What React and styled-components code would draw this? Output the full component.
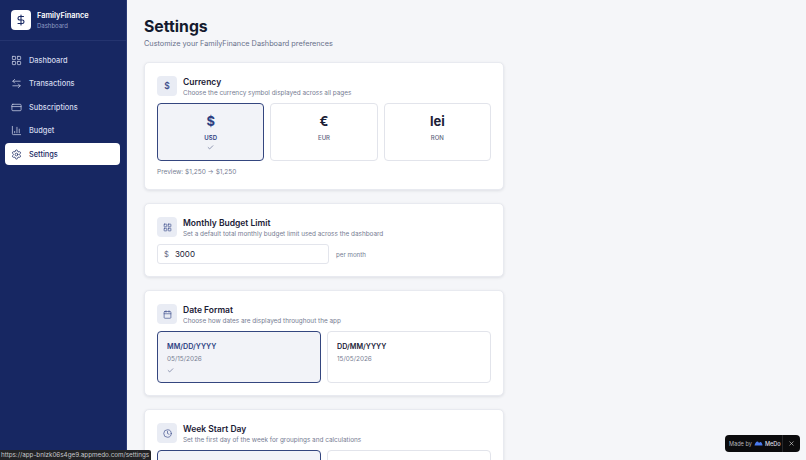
import React from "react";
import styled, { createGlobalStyle } from "styled-components";
import { LayoutGrid, ArrowLeftRight, CreditCard, BarChart3, Settings as Gear, DollarSign, Calendar, Clock, Check, X } from "lucide-react";

const Global = createGlobalStyle`
  html, body { margin: 0; padding: 0; height: 460px; overflow: hidden; background: #f5f6f9; }
  * { box-sizing: border-box; }
  body { font-family: Inter, "Liberation Sans", sans-serif; color: #141a2e; }
`;

const Page = styled.div`display: flex; height: 460px; overflow: hidden; position: relative;`;
const Sidebar = styled.aside`
  width: 127px; flex: none; background: #172762; border-right: 1px solid #2a3a75;
  display: flex; flex-direction: column;
`;
const Brand = styled.div`
  height: 41px; display: flex; align-items: center; gap: 6px; padding: 0 11px;
  border-bottom: 1px solid #24346f;
`;
const Logo = styled.div`
  width: 20px; height: 20px; border-radius: 4px; background: #fff; color: #172762;
  display: flex; align-items: center; justify-content: center;
`;
const BrandName = styled.div`font-size: 7.4px; font-weight: 600; color: #fff; line-height: 10px;`;
const BrandSub = styled.div`font-size: 6px; color: #8f9bc4; line-height: 9px;`;
const Nav = styled.nav`display: flex; flex-direction: column; gap: 1.5px; padding: 8px 6px 8px 5px;`;
const NavItem = styled.div`
  height: 22px; display: flex; align-items: center; gap: 7px; padding: 0 6px; border-radius: 4px;
  font-size: 7.4px; font-weight: 500;
  background: ${p => (p.$active ? "#fff" : "transparent")};
  color: ${p => (p.$active ? "#172762" : "#d3d9ec")};
`;
const Main = styled.main`flex: 1; padding: 17px 17px 0; min-width: 0;`;
const Title = styled.h1`margin: 0; font-size: 15.8px; line-height: 20px; font-weight: 700; color: #141a2e;`;
const Subtitle = styled.p`margin: 0; font-size: 7.3px; line-height: 13px; color: #68708a;`;
const Stack = styled.div`width: 360px; margin-top: 12px; display: flex; flex-direction: column; gap: 13px;`;
const Card = styled.section`
  background: #fff; border: 1px solid #e8eaf0; border-radius: 5px; padding: 13px 12px 12px;
  box-shadow: 0 1px 3px rgba(20,26,46,.1);
`;
const CardHeader = styled.div`display: flex; align-items: center; gap: 6px; height: 20px; margin-bottom: 7px;`;
const IconBox = styled.div`
  width: 20px; height: 20px; flex: none; border-radius: 4px; background: #e9ecf4; color: #3d4d8c;
  display: flex; align-items: center; justify-content: center; font-size: 8.5px; font-weight: 600;
`;
const HeaderText = styled.div`padding-top: 3px;`;
const CardTitle = styled.div`font-size: 8.5px; line-height: 11px; font-weight: 600; color: #1a2036;`;
const CardDesc = styled.div`font-size: 6.4px; line-height: 10px; color: #767d93;`;
const Grid = styled.div`display: grid; grid-template-columns: repeat(${p => p.$cols}, 1fr); gap: 6px;`;
const Option = styled.div`
  border-radius: 4px; border: ${p => (p.$on ? "1.5px solid #34467f" : "1.5px solid #e2e4eb")};
  background: ${p => (p.$on ? "#f2f3f8" : "#fff")};
  height: ${p => p.$h}px; display: flex; flex-direction: column;
  color: ${p => (p.$on ? "#2d3f82" : "#1a2036")};
`;
const CurrencyOption = styled(Option)`align-items: center; padding-top: 8px;`;
const Symbol = styled.div`font-size: 13px; line-height: 18px; font-weight: 700;`;
const Code = styled.div`margin-top: 2.5px; font-size: 6px; line-height: 9px; font-weight: ${p => (p.$on ? 600 : 500)}; color: ${p => (p.$on ? "#2d3f82" : "#5e667e")};`;
const Tick = styled.div`margin-top: 2.5px; display: flex; color: #3a4674;`;
const Preview = styled.div`margin-top: 7px; font-size: 6.5px; line-height: 9px; color: #767d93;`;
const BudgetRow = styled.div`display: flex; align-items: center; gap: 7px;`;
const BudgetField = styled.div`
  width: 172px; height: 20px; border: 1px solid #e3e5ec; border-radius: 3px; background: #fff;
  display: flex; align-items: center; padding: 0 6px; gap: 6px; font-size: 8px; color: #1a2036;
`;
const Prefix = styled.span`color: #5e667e; font-size: 7.6px;`;
const PerMonth = styled.span`font-size: 6.2px; color: #767d93;`;
const DateOption = styled(Option)`padding: 9px 9px 0;`;
const DateLabel = styled.div`font-size: 7.2px; line-height: 11px; font-weight: 600;`;
const DateSample = styled.div`margin-top: 1.5px; font-size: 6.4px; line-height: 10px; color: #767d93;`;
const DateTick = styled.div`margin-top: 3px; display: flex; color: #3a4674;`;
const StatusUrl = styled.div`
  position: absolute; left: 0; bottom: 0; height: 10px; padding: 0 2px 0 1px; line-height: 10px;
  background: #222326; color: #c5c7cb; font-size: 6.3px; border-top-right-radius: 2px; white-space: nowrap;
`;
const Badge = styled.div`
  position: absolute; right: 6px; bottom: 8px; width: 75px; height: 17px; border-radius: 4px;
  background: #0b0b0d; color: #b4b5ba; display: flex; align-items: center; padding-left: 4px;
  font-size: 5.6px; white-space: nowrap;
`;
const BadgeLabel = styled.div`flex: 1; display: flex; align-items: center; gap: 2px;`;
const BadgeBrand = styled.span`color: #dcdde2; font-weight: 500;`;
const BadgeClose = styled.div`
  width: 18px; height: 17px; border-left: 1px solid #26272b; display: flex; align-items: center; justify-content: center; color: #e5e5e5;
`;

const nav = [
  ["Dashboard", LayoutGrid], ["Transactions", ArrowLeftRight], ["Subscriptions", CreditCard],
  ["Budget", BarChart3], ["Settings", Gear],
];

const Header = ({ icon, title, desc }) => (
  <CardHeader>
    <IconBox>{icon}</IconBox>
    <HeaderText>
      <CardTitle>{title}</CardTitle>
      <CardDesc>{desc}</CardDesc>
    </HeaderText>
  </CardHeader>
);

const Currency = ({ sym, code, on }) => (
  <CurrencyOption $on={on} $h={58}>
    <Symbol>{sym}</Symbol>
    <Code $on={on}>{code}</Code>
    {on && <Tick><Check size={7} strokeWidth={1.8} /></Tick>}
  </CurrencyOption>
);

const DateCard = ({ label, sample, on }) => (
  <DateOption $on={on} $h={52}>
    <DateLabel>{label}</DateLabel>
    <DateSample>{sample}</DateSample>
    {on && <DateTick><Check size={7} strokeWidth={1.8} /></DateTick>}
  </DateOption>
);

export default function App() {
  return (
    <Page>
      <Global />
      <Sidebar>
        <Brand>
          <Logo><DollarSign size={12} strokeWidth={2.2} /></Logo>
          <div>
            <BrandName>FamilyFinance</BrandName>
            <BrandSub>Dashboard</BrandSub>
          </div>
        </Brand>
        <Nav>
          {nav.map(([label, Icon]) => (
            <NavItem key={label} $active={label === "Settings"}>
              <Icon size={11} strokeWidth={1.6} />
              {label}
            </NavItem>
          ))}
        </Nav>
      </Sidebar>
      <Main>
        <Title>Settings</Title>
        <Subtitle>Customize your FamilyFinance Dashboard preferences</Subtitle>
        <Stack>
          <Card>
            <Header icon="$" title="Currency" desc="Choose the currency symbol displayed across all pages" />
            <Grid $cols={3}>
              <Currency sym="$" code="USD" on />
              <Currency sym="€" code="EUR" />
              <Currency sym="lei" code="RON" />
            </Grid>
            <Preview>Preview: $1,250 → $1,250</Preview>
          </Card>
          <Card>
            <Header icon={<LayoutGrid size={9} strokeWidth={1.8} />} title="Monthly Budget Limit" desc="Set a default total monthly budget limit used across the dashboard" />
            <BudgetRow>
              <BudgetField><Prefix>$</Prefix>3000</BudgetField>
              <PerMonth>per month</PerMonth>
            </BudgetRow>
          </Card>
          <Card>
            <Header icon={<Calendar size={9} strokeWidth={1.8} />} title="Date Format" desc="Choose how dates are displayed throughout the app" />
            <Grid $cols={2}>
              <DateCard label="MM/DD/YYYY" sample="05/15/2026" on />
              <DateCard label="DD/MM/YYYY" sample="15/05/2026" />
            </Grid>
          </Card>
          <Card>
            <Header icon={<Clock size={9} strokeWidth={1.8} />} title="Week Start Day" desc="Set the first day of the week for groupings and calculations" />
            <Grid $cols={2}>
              <Option $on $h={52} />
              <Option $h={52} />
            </Grid>
          </Card>
        </Stack>
      </Main>
      <StatusUrl>https://app-bnlzk06s4ge9.appmedo.com/settings</StatusUrl>
      <Badge>
        <BadgeLabel>
          Made by
          <svg width="9" height="5" viewBox="0 0 18 10"><path d="M1 9C2 5 4 1 7 1c2 0 2 2 3 3 1-1 2-2 3-2 2 0 4 4 4 7z" fill="#4a7bf0" /></svg>
          <BadgeBrand>MeDo</BadgeBrand>
        </BadgeLabel>
        <BadgeClose><X size={7} strokeWidth={2} /></BadgeClose>
      </Badge>
    </Page>
  );
}
